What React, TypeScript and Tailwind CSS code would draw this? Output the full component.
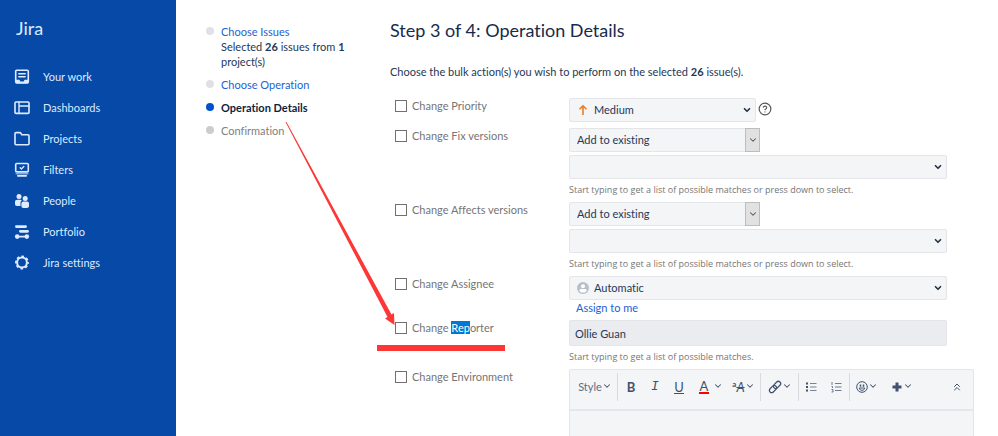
import type { ReactNode } from "react";
import { ChevronDown, ChevronsUp, CircleQuestionMark } from "lucide-react";
import clsx from "clsx";

const NAV_ITEMS = [
  { label: "Your work", icon: <WorkIcon /> },
  { label: "Dashboards", icon: <DashboardIcon /> },
  { label: "Projects", icon: <FolderIcon /> },
  { label: "Filters", icon: <FilterIcon /> },
  { label: "People", icon: <PeopleIcon /> },
  { label: "Portfolio", icon: <PortfolioIcon /> },
  { label: "Jira settings", icon: <SettingsIcon /> },
];

const MATCH_HINT =
  "Start typing to get a list of possible matches or press down to select.";

function NavSvg({ children }: { children: ReactNode }) {
  return (
    <svg
      viewBox="0 0 16 16"
      className="size-4 shrink-0"
      fill="none"
      stroke="currentColor"
      strokeWidth="1.6"
      strokeLinejoin="round"
      strokeLinecap="round"
    >
      {children}
    </svg>
  );
}

function WorkIcon() {
  return (
    <NavSvg>
      <rect x="1.7" y="1.2" width="12.6" height="12.8" rx="1" />
      <path d="M4.8 4.8h6.4M4.800 7.700h6.400" strokeWidth="1.400" />
      <path d="M2 10.700h3.400l1 1.700h3.200l1-1.700H14v3.600H2z" fill="currentColor" stroke="none" />
    </NavSvg>
  );
}

function DashboardIcon() {
  return (
    <NavSvg>
      <rect x="1" y="2" width="14" height="11.400" rx="1" />
      <path d="M5 2v11.400M5 6h10" strokeWidth="1.400" />
    </NavSvg>
  );
}

function FolderIcon() {
  return (
    <NavSvg>
      <path d="M1 2.600c0-.6.4-1 1-1h4.400l1.400 2.200H14c.6 0 1 .4 1 1v7.900c0 .6-.4 1-1 1H2c-.6 0-1-.4-1-1z" />
    </NavSvg>
  );
}

function FilterIcon() {
  return (
    <NavSvg>
      <rect x="1.700" y="1.500" width="12.600" height="8.400" rx="1" />
      <path d="M6.200 5.800l1.200 1.100 2.400-2.300" strokeWidth="1.400" />
      <path d="M2.200 11.700h11.600" strokeOpacity="0.6" />
      <path d="M3.800 13.900h8.400" />
    </NavSvg>
  );
}

function PeopleIcon() {
  return (
    <NavSvg>
      <g fill="currentColor" stroke="none">
        <circle cx="5" cy="3.400" r="2.500" />
        <circle cx="11.200" cy="5.400" r="2.500" />
        <path d="M1 9c0-1.300.9-2.200 2.200-2.200h3.600c.5 0 .9.2 1.100.5-.9.6-1.400 1.500-1.400 2.700v3H3c-1.200 0-2-.8-2-2z" />
        <path d="M7.400 10.600c0-1.200.9-2 2-2h3.600c1.200 0 2 .8 2 2V13c0 1.200-.9 2-2 2H9.400c-1.200 0-2-.8-2-2z" />
      </g>
    </NavSvg>
  );
}

function PortfolioIcon() {
  return (
    <NavSvg>
      <path d="M2.400 2.600h9.200M6.400 7.300h7.200" strokeWidth="2.800" />
      <path d="M3 12.600h10" />
      <circle cx="3.200" cy="12.600" r="2.300" fill="currentColor" stroke="none" />
      <circle cx="12.800" cy="12.600" r="2.300" fill="currentColor" stroke="none" />
    </NavSvg>
  );
}

function SettingsIcon() {
  return (
    <NavSvg>
      <circle cx="8" cy="7.500" r="4.900" strokeWidth="2" />
      <circle
        cx="8"
        cy="7.500"
        r="6.100"
        strokeWidth="1.800"
        strokeLinecap="butt"
        strokeDasharray="2.600 2.191"
        strokeDashoffset="1.300"
      />
    </NavSvg>
  );
}

function Sidebar() {
  return (
    <aside className="w-44 shrink-0 bg-[#0649a7] text-[#deebff]">
      <div className="px-4 pt-4 text-lg leading-6">Jira</div>
      <nav className="flex flex-col px-3.5 pt-[21px]">
        {NAV_ITEMS.map((item) => (
          <a key={item.label} href="#" className="flex h-[31px] items-center gap-[13px]">
            {item.icon}
            <span>{item.label}</span>
          </a>
        ))}
      </nav>
    </aside>
  );
}

interface StepProps {
  dot: string;
  children: ReactNode;
}

function Step({ dot, children }: StepProps) {
  return (
    <li className="flex gap-[7px]">
      <span className={clsx("mt-[3px] size-2 shrink-0 rounded-full", dot)} />
      <div>{children}</div>
    </li>
  );
}

function Steps() {
  return (
    <ol className="flex w-[214px] shrink-0 flex-col gap-2 pt-6 pr-11 pl-[30px] leading-[15px]">
      <Step dot="bg-[#dfe1e6]">
        <a href="#" className="text-[#2461d1]">Choose Issues</a>
        <p>
          Selected <b>26</b> issues from <b>1</b> project(s)
        </p>
      </Step>
      <Step dot="bg-[#dfe1e6]">
        <a href="#" className="text-[#2461d1]">Choose Operation</a>
      </Step>
      <Step dot="bg-[#0052cc]">
        <b className="text-[#0f1f3d]">Operation Details</b>
      </Step>
      <Step dot="bg-[#cccccc]">
        <span className="text-[#808080]">Confirmation</span>
      </Step>
    </ol>
  );
}

interface RowProps {
  id: string;
  label: ReactNode;
  className?: string;
  children: ReactNode;
}

function Row({ id, label, className, children }: RowProps) {
  return (
    <div className={clsx("flex", className)}>
      <div className="flex h-4 w-[179px] shrink-0 items-center gap-[5px] pl-[5px]">
        <input
          id={id}
          type="checkbox"
          className="size-3 appearance-none border border-[#707070] bg-white checked:bg-[#0052cc]"
        />
        <label htmlFor={id} className="text-[#757575]">{label}</label>
      </div>
      <div className="flex min-w-0 flex-1 flex-col">{children}</div>
    </div>
  );
}

interface SelectProps {
  label: string;
  value: string;
  icon?: ReactNode;
  className?: string;
}

function Select({ label, value, icon, className }: SelectProps) {
  return (
    <div className={clsx("relative", className)}>
      <select
        aria-label={label}
        className="h-6 w-full appearance-none rounded-xs border border-[#e3e5e9] bg-[#f4f5f7] pl-6"
      >
        <option>{value}</option>
      </select>
      <span className="pointer-events-none absolute inset-y-0 left-2 flex items-center">{icon}</span>
      <ChevronDown
        className="pointer-events-none absolute top-[7px] right-1 size-2.5 text-[#253246]"
        strokeWidth={4}
      />
    </div>
  );
}

function VersionFields({ name }: { name: string }) {
  return (
    <>
      <div className="relative w-[191px]">
        <select
          aria-label={`${name} action`}
          className="h-6 w-full appearance-none rounded-xs border border-[#e3e5e9] bg-[#f4f5f7] pl-[7px]"
        >
          <option>Add to existing</option>
        </select>
        <span className="pointer-events-none absolute inset-y-0 right-0 flex w-[15px] items-center justify-center border border-[#bdbdbd] bg-[#e1e1e1]">
          <ChevronDown className="size-2.5 text-[#555555]" strokeWidth={2.5} />
        </span>
      </div>
      <div className="relative mt-[3px] mr-[27px]">
        <input
          role="combobox"
          aria-label={name}
          aria-expanded={false}
          className="h-6 w-full rounded-xs border border-[#e3e5e9] bg-[#f4f5f7] px-2"
        />
        <ChevronDown
          className="pointer-events-none absolute top-[7px] right-1 size-2.5 text-[#253246]"
          strokeWidth={4}
        />
      </div>
      <Hint>{MATCH_HINT}</Hint>
    </>
  );
}

function Hint({ children }: { children: ReactNode }) {
  return (
    <p className="mt-[3px] font-['Open_Sans',sans-serif] text-[9px] leading-4 text-[#757575]">
      {children}
    </p>
  );
}

interface ToolProps {
  label: string;
  menu?: boolean;
  className?: string;
  children: ReactNode;
}

function Tool({ label, menu, className, children }: ToolProps) {
  return (
    <button
      type="button"
      aria-label={label}
      className={clsx("flex h-6 shrink-0 items-center justify-center", className)}
    >
      {children}
      {menu && <ChevronDown className="mb-0.5 size-2.5 shrink-0" strokeWidth={2.5} />}
    </button>
  );
}

function Divider() {
  return <span className="h-7 w-px shrink-0 bg-[#d9dbe0]" />;
}

function Toolbar() {
  return (
    <div className="flex h-[41px] items-center border-b-2 border-[#e6e7ea] pr-2.5 pb-[5px] pl-[7px] text-[13px] text-[#42526e]">
      <Tool label="Style" menu className="mr-1 w-9 text-[11px]">
        <span className="text-[#5e6c84]">Style</span>
      </Tool>
      <Divider />
      <Tool label="Bold" className="ml-px w-6 font-bold">B</Tool>
      <Tool label="Italic" className="w-6 font-['Liberation_Mono',monospace] italic">I</Tool>
      <Tool label="Underline" className="w-6">
        <span className="border-b border-current leading-3">U</span>
      </Tool>
      <Tool label="Text color" menu className="w-9 gap-1 pl-1">
        <span className="border-b-2 border-[#ff0000] px-px leading-3">A</span>
      </Tool>
      <Tool label="More formatting" menu className="w-[33px]">
        <span className="mb-1.5 text-[8px] font-bold">a</span>
        <span className="italic line-through">A</span>
      </Tool>
      <Divider />
      <Tool label="Link" menu className="w-[37px]">
        <svg viewBox="0 0 14 14" className="size-3.5" fill="none" stroke="currentColor" strokeWidth="1.3">
          <g transform="rotate(-45 7 7)">
            <rect x="0" y="4.700" width="8.200" height="4.600" rx="2.300" />
            <rect x="5.800" y="4.700" width="8.200" height="4.600" rx="2.300" />
          </g>
        </svg>
      </Tool>
      <Divider />
      <Tool label="Bullet list" className="w-6">
        <svg viewBox="0 0 12 12" className="size-3" stroke="currentColor">
          <path d="M1 2.500h2M1 6h2M1 9.500h2" strokeWidth="2" />
          <path d="M5 2.500h6.500M5 6h6.500M5 9.500h6.500" strokeOpacity="0.7" />
        </svg>
      </Tool>
      <Tool label="Numbered list" className="w-[26px]">
        <svg viewBox="0 0 12 12" className="size-3" fill="none" stroke="currentColor" strokeOpacity="0.75">
          <path d="M2 1v3M1.500 5.500h1v1.500M1.500 8.500h1.500v2.500h-1.500" />
          <path d="M5 2.500h6.500M5 6h6.500M5 9.500h6.500" />
        </svg>
      </Tool>
      <Divider />
      <Tool label="Emoji" menu className="w-[34px]">
        <svg viewBox="0 0 12 12" className="size-3" fill="none" stroke="currentColor">
          <circle cx="6" cy="6" r="5.300" />
          <path d="M4.500 3.500v2.300M7.500 3.500v2.300" strokeWidth="1.500" />
          <path d="M3.300 7h5.400c-.2 1.500-1.300 2.300-2.700 2.300S3.500 8.500 3.300 7z" />
        </svg>
      </Tool>
      <Tool label="Insert" menu className="w-9">
        <svg viewBox="0 0 10 10" className="mr-px size-2.5" stroke="currentColor" strokeWidth="3">
          <path d="M5 .5v9M.5 5h9" />
        </svg>
      </Tool>
      <Tool label="Collapse toolbar" className="ml-auto">
        <ChevronsUp className="size-3" strokeWidth={2} />
      </Tool>
    </div>
  );
}

// Red arrow and underline that point at the reporter field
function Annotations() {
  return (
    <svg
      aria-hidden="true"
      className="pointer-events-none absolute top-0 left-0 h-[360px] w-[520px]"
      viewBox="0 0 520 360"
      fill="#fd3636"
    >
      <path d="M285.500 122L286.500 122L391.500 314.500L394 313L394.500 325L385 318.500L387.500 317z" />
      <rect x="377" y="345" width="128" height="6" />
    </svg>
  );
}

export default function App() {
  return (
    <div className="relative flex min-h-screen bg-white font-[Lato,sans-serif] text-[11px] leading-4 text-[#253858] [font-variant-ligatures:none]">
      <Sidebar />
      <Steps />
      <main className="flex min-w-0 flex-1 flex-col pr-6">
        <h1 className="pt-[18px] text-lg leading-6 text-[#172b4d]">
          Step 3 of 4: Operation Details
        </h1>
        <p className="mt-[22px]">
          Choose the bulk action(s) you wish to perform on the selected <b>26</b> issue(s).
        </p>
        <form className="mt-[18px] flex flex-1 flex-col gap-1">
          <Row id="priority" label="Change Priority" className="mb-0.5">
            <div className="flex gap-0.5">
              <Select
                label="Priority"
                value="Medium"
                className="w-[187px]"
                icon={
                  <svg viewBox="0 0 12 12" className="size-3" fill="none" stroke="#ea7d24" strokeWidth="1.6">
                    <path d="M6 11V2M2.500 5.300L6 1.800l3.500 3.500" />
                  </svg>
                }
              />
              <CircleQuestionMark className="mt-1 size-3.5 text-[#555555]" />
            </div>
          </Row>
          <Row id="fix" label="Change Fix versions">
            <VersionFields name="Fix versions" />
          </Row>
          <Row id="affects" label="Change Affects versions">
            <VersionFields name="Affects versions" />
          </Row>
          <Row id="assignee" label="Change Assignee">
            <Select
              label="Assignee"
              value="Automatic"
              className="mr-[27px]"
              icon={
                <svg viewBox="0 0 12 12" className="size-3">
                  <circle cx="6" cy="6" r="6" fill="#b9bfca" />
                  <circle cx="6" cy="4.200" r="2" fill="#fff" />
                  <path d="M2.500 9.300V8.200c0-.8.6-1.300 1.300-1.300h4.400c.7 0 1.300.5 1.300 1.300v1.100C8 11 4 11 2.500 9.300z" fill="#fff" />
                </svg>
              }
            />
            <a href="#" className="self-start pl-[7px] text-[#2461d1]">Assign to me</a>
          </Row>
          <Row
            id="reporter"
            label={
              <>
                Change <span className="bg-[#0078d7] text-white">Rep</span>orter
              </>
            }
          >
            <input
              aria-label="Reporter"
              defaultValue="Ollie Guan"
              className="mr-[27px] h-[26px] rounded-xs border border-[#e3e5e9] bg-[#ebecf0] px-[5px]"
            />
            <Hint>Start typing to get a list of possible matches.</Hint>
          </Row>
          <Row id="environment" label="Change Environment" className="flex-1">
            <div className="flex flex-1 flex-col rounded-t-xs border border-b-0 border-[#e3e5e9] bg-[#f4f5f7]">
              <Toolbar />
              <textarea aria-label="Environment" rows={1} className="min-h-6 flex-1 resize-none px-2" />
            </div>
          </Row>
        </form>
      </main>
      <Annotations />
    </div>
  );
}
